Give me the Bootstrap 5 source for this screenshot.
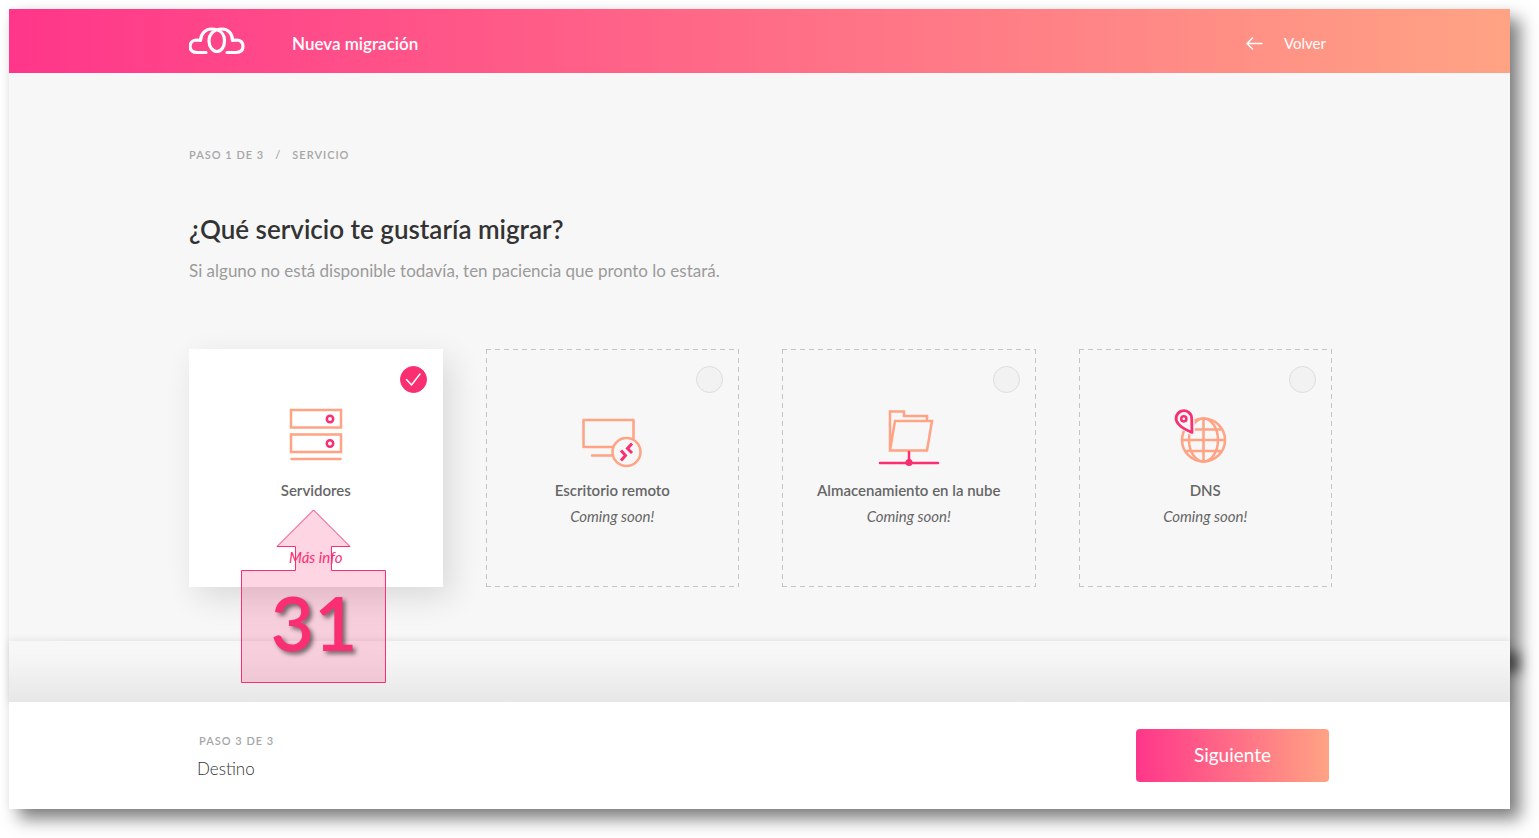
<!DOCTYPE html>
<html lang="es">
<head>
<meta charset="utf-8">
<meta name="viewport" content="width=device-width, initial-scale=1">
<title>Nueva migración</title>
<link href="https://cdn.jsdelivr.net/npm/bootstrap@5.3.0/dist/css/bootstrap.min.css" rel="stylesheet">
<style>
:root{--pink:#f92f71;--peach:#ffa384;--brand:linear-gradient(90deg,#ff368a,#ffa384)}
body{font-family:Lato,"Liberation Sans",sans-serif;background:#fff;color:#666}
.app-page{padding:9px 29px 29px 9px;min-height:100vh}
.app-frame{background:#f7f7f7;box-shadow:10px 10px 16px rgba(0,0,0,.5),0 0 8px rgba(0,0,0,.04)}
.app-wrap{width:100%;max-width:1145px;margin:0 auto;padding-left:2px}
.app-bar{background:var(--brand);min-height:64px;color:#fff}
.app-title{font-size:17px;line-height:24px;font-weight:600;margin:5px 0 0 47px}
.back-link{color:#fff;font-size:15px;line-height:24px;gap:21px;margin:4px 6px 0 0}
.app-main{padding-top:72px}
.crumbs{font-size:11px;line-height:20px;font-weight:600;letter-spacing:1px;color:#a6a6a6;--bs-breadcrumb-divider:"/"}
.crumbs .breadcrumb-item+.breadcrumb-item{padding-left:11px}
.crumbs .breadcrumb-item+.breadcrumb-item::before{color:#a6a6a6;padding-right:11px}
.page-title{font-size:26px;line-height:32px;font-weight:600;color:#333;margin-top:48px}
.page-lead{font-size:17px;line-height:24px;color:#9b9b9b;margin-top:14px}
.service-grid{display:grid;grid-template-columns:repeat(auto-fit,minmax(220px,1fr));gap:43px;padding:66px 0 54px}
.service{min-height:238px;padding-top:53px;cursor:pointer;
  --h:repeating-linear-gradient(90deg,#c4c4c4 0 5px,transparent 5px 9px);
  --v:repeating-linear-gradient(180deg,#c4c4c4 0 5px,transparent 5px 9px);
  background:var(--h) top/100% 1px no-repeat,var(--h) bottom/100% 1px no-repeat,var(--v) left/1px 100% no-repeat,var(--v) right/1px 100% no-repeat}
.service-on{background:#fff;box-shadow:8px 10px 30px rgba(0,0,0,.12);z-index:1}
.service svg.pic{width:72px;height:72px}
.service-name{font-size:15px;line-height:26px;font-weight:600;margin-top:3px}
.service-note{font-size:15px;line-height:26px;font-style:italic}
.pick{position:absolute;top:17px;right:16px;width:27px;height:27px;margin:0;appearance:none;border:1px solid #ddd;border-radius:50%;background:#f2f2f2}
.pick:checked{border-color:var(--pink);background:var(--pink)}
.tick{position:absolute;top:17px;right:16px;width:27px;height:27px;pointer-events:none}
.more-link{color:var(--pink);font-size:15px;line-height:26px;font-style:italic;margin-top:41px}
.callout{position:absolute;left:52px;top:160px;width:146px;height:175px;pointer-events:none}
.callout-num{position:absolute;left:0;right:0;top:73px;font-size:75px;line-height:80px;font-weight:600;color:var(--pink);text-shadow:3px 3px 4px rgba(0,0,0,.5);text-align:center}
.app-fade{height:61px;background:linear-gradient(#f7f7f7 20%,#e7e7e7);box-shadow:30px -9px 12px -20px rgba(0,0,0,.5),0 0 8px rgba(0,0,0,.1)}
.app-foot{background:#fff;min-height:107px}
.foot-step{font-size:11px;line-height:20px;font-weight:600;letter-spacing:1px;color:#a6a6a6;padding-left:2px}
.foot-name{font-size:17px;line-height:24px;color:#333;font-weight:300;margin-top:6px}
.next-btn{width:193px;height:53px;border:0;border-radius:4px;background:var(--brand);color:#fff;font-size:19px;margin-right:3px}
</style>
</head>
<body>
<div class="app-page">
<div class="app-frame">
  <header class="app-bar d-flex align-items-center">
    <div class="app-wrap d-flex align-items-center">
      <svg width="56" height="30" viewBox="0 0 56 30" fill="none" stroke="#fff" stroke-width="3.200" stroke-linecap="round" stroke-linejoin="round" aria-hidden="true">
        <path d="M17 26.500H8C3.500 26.500 1 23.800 1 20.300S3.500 14 8 14L11.500 14.500C12 7 17 3 22.500 3C31 3 35.500 8 35.500 15C35.500 21 32 25.500 28 25.500S20 21 20 15C20 8 25 3 33 3C38.500 3 43.500 7 43.500 14.500L47 14C51.500 14 54 16.500 54 20.300S51.500 26.500 47 26.500H38"/>
      </svg>
      <h1 class="app-title">Nueva migración</h1>
      <a href="#" class="back-link ms-auto d-flex align-items-center text-decoration-none">
        <svg width="17" height="13" viewBox="0 0 17 13" fill="none" stroke="#fff" stroke-width="1.500" stroke-linecap="round" stroke-linejoin="round" aria-hidden="true"><path d="M16 6.500H1M6.500 1L1 6.500L6.500 12"/></svg>
        Volver
      </a>
    </div>
  </header>

  <main class="app-main">
    <div class="app-wrap">
      <nav aria-label="Pasos">
        <ol class="breadcrumb crumbs mb-0">
          <li class="breadcrumb-item">PASO 1 DE 3</li>
          <li class="breadcrumb-item">SERVICIO</li>
        </ol>
      </nav>
      <h2 class="page-title mb-0">¿Qué servicio te gustaría migrar?</h2>
      <p class="page-lead mb-0">Si alguno no está disponible todavía, ten paciencia que pronto lo estará.</p>

      <form class="service-grid">
        <div class="service service-on position-relative d-flex flex-column align-items-center">
          <input class="pick" type="radio" name="service" id="s1" checked>
          <svg class="tick" viewBox="0 0 27 27" fill="none" stroke="#fff" stroke-width="1.500" stroke-linecap="round" stroke-linejoin="round"><path d="M6.500 13.500L11.500 19L20 8"/></svg>
          <svg class="pic" viewBox="0 0 72 72" fill="none" stroke="#ffa384" stroke-width="2.500" stroke-linecap="round" aria-hidden="true">
            <path d="M11 8H61V25.500H11ZM11 32.500H61V50H11ZM11.500 57H60.500"/>
            <g stroke="#f92f71"><circle cx="50" cy="17" r="3.200"/><circle cx="50" cy="41.500" r="3.200"/></g>
          </svg>
          <label class="service-name" for="s1">Servidores</label>
          <a href="#" class="more-link text-decoration-none">Más info</a>
          <div class="callout">
            <svg width="146" height="175" viewBox="0 0 146 175" aria-hidden="true"><path d="M72.500 1L109 37.500H90.500V61.500H144.500V173.500H.5V61.500H54.500V37.500H36Z" fill="#f92f71" fill-opacity=".2" stroke="#f92f71"/></svg>
            <div class="callout-num">31</div>
          </div>
        </div>

        <div class="service position-relative d-flex flex-column align-items-center">
          <input class="pick" type="radio" name="service" id="s2" disabled>
          <svg class="pic" viewBox="0 0 72 72" fill="none" stroke="#ffa384" stroke-width="2.500" stroke-linecap="round" stroke-linejoin="round" aria-hidden="true">
            <path d="M57.500 36V18H7.500V45H37M16 53.500H37"/><circle cx="50.500" cy="50" r="14"/>
            <path stroke="#f92f71" stroke-width="3" stroke-linecap="butt" stroke-linejoin="miter" d="M45 48.500L49.500 53.500L45 58.500M56 41.500L51.500 46.500L56 51"/>
          </svg>
          <label class="service-name" for="s2">Escritorio remoto</label>
          <span class="service-note">Coming soon!</span>
        </div>

        <div class="service position-relative d-flex flex-column align-items-center">
          <input class="pick" type="radio" name="service" id="s3" disabled>
          <svg class="pic" viewBox="0 0 72 72" fill="none" stroke="#ffa384" stroke-width="2.500" stroke-linecap="round" aria-hidden="true">
            <path d="M17 48V9.500H31V14H54V18M22 19H59L54 48.500H17Z"/>
            <path stroke="#f92f71" d="M36 50V62M7 61H65"/><circle cx="36" cy="60.500" r="3.500" fill="#f92f71" stroke="none"/>
          </svg>
          <label class="service-name" for="s3">Almacenamiento en la nube</label>
          <span class="service-note">Coming soon!</span>
        </div>

        <div class="service position-relative d-flex flex-column align-items-center">
          <input class="pick" type="radio" name="service" id="s4" disabled>
          <svg class="pic" viewBox="0 0 72 72" fill="none" stroke="#ffa384" stroke-width="2.500" stroke-linejoin="round" aria-hidden="true">
            <circle cx="34.500" cy="38" r="21.500"/><ellipse cx="34.500" cy="38" rx="14.500" ry="21.500"/>
            <path d="M34.500 16.500V59.500M13 38H56M17 27.500H52M17 49H52"/>
            <path stroke="#f7f7f7" stroke-width="6" fill="#f7f7f7" d="M23 30.500L10.500 22.500A7.800 7.800 0 1 1 22.500 16Z"/>
            <path stroke="#f92f71" stroke-width="2.800" d="M23 30.500C17 28 12 25.500 9 21.500A7.800 7.800 0 1 1 22.700 16.500Z"/><circle cx="14.800" cy="16.800" r="2.600" stroke="#f92f71"/>
          </svg>
          <label class="service-name" for="s4">DNS</label>
          <span class="service-note">Coming soon!</span>
        </div>
      </form>
    </div>
    <div class="app-fade"></div>
  </main>

  <footer class="app-foot position-relative d-flex align-items-center">
    <div class="app-wrap d-flex align-items-center justify-content-between">
      <div class="ps-2">
        <div class="foot-step">PASO 3 DE 3</div>
        <div class="foot-name">Destino</div>
      </div>
      <button type="button" class="next-btn">Siguiente</button>
    </div>
  </footer>
</div>
</div>
<script src="https://cdn.jsdelivr.net/npm/bootstrap@5.3.0/dist/js/bootstrap.bundle.min.js"></script>
</body>
</html>
